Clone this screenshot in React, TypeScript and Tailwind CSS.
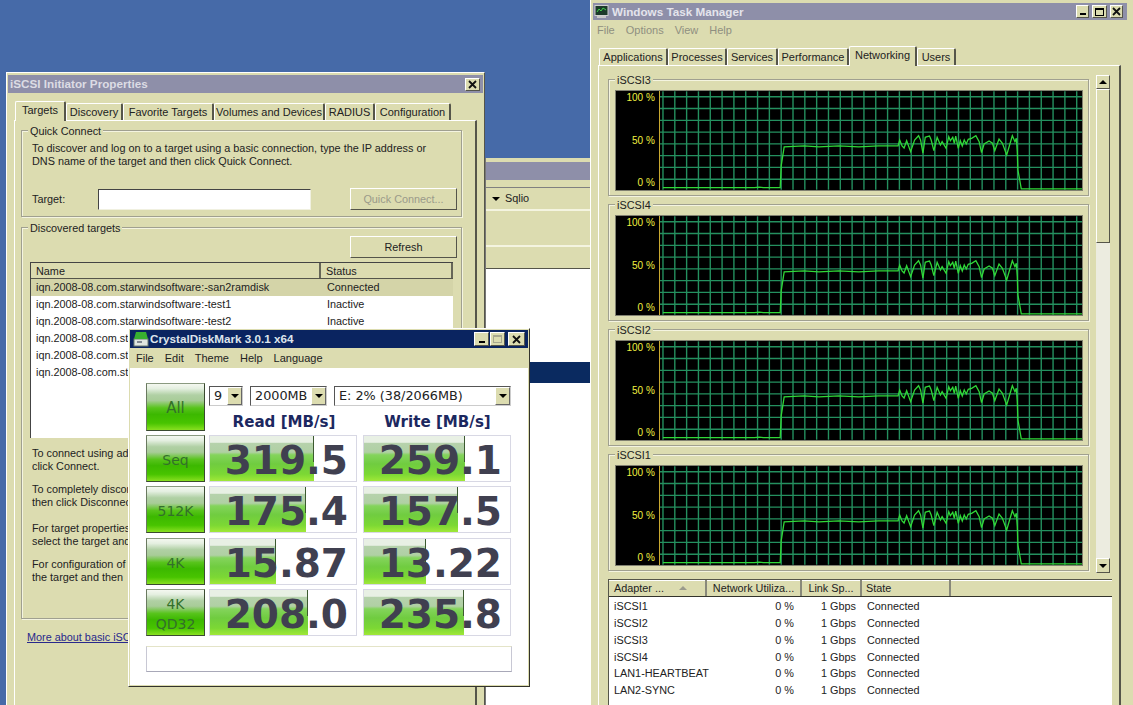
import React from 'react';

const GRAPHS = ['iSCSI3', 'iSCSI4', 'iSCSI2', 'iSCSI1'];

// usage trace read off the reference, as [x, y] at 3x, starting where the load gets noisy
const TRACE = [
  [50, 78], [55, 60], [62, 78], [68, 84], [76, 62], [88, 95], [100, 60], [112, 47], [118, 60], [125, 100],
  [132, 52], [138, 50], [145, 48], [150, 60], [158, 92], [168, 52], [178, 75], [183, 65], [195, 85], [203, 50],
  [208, 62], [215, 52], [220, 70], [224, 48], [232, 85], [238, 62], [244, 78], [250, 60], [256, 72], [262, 58],
  [272, 55], [285, 47], [295, 65], [302, 98], [310, 72], [325, 63], [335, 70], [342, 92], [355, 57], [365, 70],
  [378, 105], [395, 47], [403, 65], [407, 55], [410, 95], [412, 150], [422, 208],
];
const TRACE_POINTS = TRACE.map(([x, y]) => `${(223 + x / 3).toFixed(1)},${(29 + y / 3).toFixed(1)}`).join(' ');

const ADAPTERS = ['iSCSI1', 'iSCSI2', 'iSCSI3', 'iSCSI4', 'LAN1-HEARTBEAT', 'LAN2-SYNC'];

const SCORES = [
  { label: 'Seq', read: '319.5', readBar: 104, write: '259.1', writeBar: 101 },
  { label: '512K', read: '175.4', readBar: 96, write: '157.5', writeBar: 94 },
  { label: '4K', read: '15.87', readBar: 66, write: '13.22', writeBar: 62 },
  { label: '4K QD32', read: '208.0', readBar: 98, write: '235.8', writeBar: 100 },
];

const Tab = ({ label, width, active }: { label: string; width: number; active?: boolean }) => (
  <div
    style={{ width }}
    className={`flex items-center justify-center whitespace-nowrap border-t border-l border-r-2 border-t-white border-l-white border-r-[#55554a] rounded-t-[2px] ${
      active ? 'h-[20px] relative z-10 -mb-px pb-[2px] bg-[#dcdcb0]' : 'h-[17px]'
    }`}
  >
    {label}
  </div>
);

const Raised = ({ className, children }: { className: string; children?: React.ReactNode }) => (
  <div className={`flex items-center justify-center bg-[#dcdcb0] border border-t-white border-l-white border-r-[#55554a] border-b-[#55554a] ${className}`}>
    {children}
  </div>
);

const Arrow = ({ up, muted }: { up?: boolean; muted?: boolean }) => (
  <div
    className={`w-0 h-0 border-x-[4px] border-x-transparent ${
      up ? (muted ? 'border-b-[4px] border-b-[#9a9a8c]' : 'border-b-[4px] border-b-black') : 'border-t-[4px] border-t-black'
    }`}
  />
);

const Group = ({ title, className, children }: { title: string; className: string; children?: React.ReactNode }) => (
  <div className={`relative border border-[#a0a090] shadow-[inset_1px_1px_0_#f4f4e0,1px_1px_0_#f4f4e0] ${className}`}>
    <span className="absolute left-[6px] -top-[7px] bg-[#dcdcb0] px-[2px] leading-[14px]">{title}</span>
    {children}
  </div>
);

const CloseX = () => (
  <svg width="9" height="9" viewBox="0 0 9 9">
    <path d="M1 1L8 8M8 1L1 8" stroke="#111" strokeWidth="1.8" />
  </svg>
);

const NetworkGraph = ({ name }: { name: string }) => {
  const vertical = Array.from({ length: 36 }, (_, i) => 3 + i * 11.9);
  const horizontal = Array.from({ length: 8 }, (_, i) => 5.5 + i * 11.85);

  return (
    <Group title={name} className="h-[117px] pt-[10px] pl-[6px] pr-[5px]">
      <div className="flex h-[101px] bg-black border border-[#808070]">
        <div className="w-[43px] flex flex-col justify-between items-end pr-[4px] pt-[1px] pb-[1px] text-[10px] leading-[12px] text-[#f0f040]">
          <span>100 %</span>
          <span>50 %</span>
          <span>0 %</span>
        </div>
        <svg width="425" height="99" viewBox="0 0 425 99" className="border-l border-l-[#c8a830]">
          {vertical.map((x) => (
            <line key={x} x1={x} x2={x} y1="0" y2="99" stroke="#24905f" strokeWidth="1.4" />
          ))}
          {horizontal.map((y) => (
            <line key={y} x1="0" x2="425" y1={y} y2={y} stroke="#24905f" strokeWidth="1.4" />
          ))}
          <polyline
            fill="none"
            stroke="#30d838"
            strokeWidth="1.3"
            points={`3,97 95,97 100,96.4 104,97 121,97 122,75 125,56 145,55 160,56 180,55 200,56 220,55 ${TRACE_POINTS} 425,98.3`}
          />
        </svg>
      </div>
    </Group>
  );
};

const TaskManager = () => (
  <div className="absolute left-[590px] top-0 w-[543px] h-[705px] bg-[#dcdcb0] border-l border-l-white pt-[3px] text-[10.85px] text-[#222]">
    <div className="flex items-center h-[17px] ml-[2px] mr-[6px] pl-[1px] pr-[4px] bg-[#8e8fa9]">
      <svg width="15" height="13" viewBox="0 0 15 13">
        <rect x="1" y="0.5" width="13" height="10" fill="#1c3a2a" stroke="#d0d0d0" />
        <path d="M3 7L5 4L7 6L9 3L12 5" stroke="#3ed04a" fill="none" />
        <rect x="3" y="11" width="9" height="2" fill="#c8c8c8" />
      </svg>
      <span className="ml-[3px] flex-1 font-bold text-[11.7px] text-[#e4e4ec]">Windows Task Manager</span>
      <div className="flex gap-[3px]">
        <Raised className="w-[13px] h-[13px] items-end pb-[2px]">
          <div className="w-[6px] h-[2px] bg-black" />
        </Raised>
        <Raised className="w-[15px] h-[13px]">
          <div className="w-[9px] h-[8px] border border-t-2 border-black" />
        </Raised>
        <Raised className="w-[13px] h-[13px]">
          <CloseX />
        </Raised>
      </div>
    </div>
    <div className="flex h-[21px] items-center pl-[6px] gap-[11px] text-[#8f8f80] text-[11px]">
      <span>File</span>
      <span>Options</span>
      <span>View</span>
      <span>Help</span>
    </div>
    <div className="flex items-end h-[24px] pl-[8px] text-[11px]">
      <Tab label="Applications" width={69} />
      <Tab label="Processes" width={59} />
      <Tab label="Services" width={51} />
      <Tab label="Performance" width={71} />
      <Tab label="Networking" width={68} active />
      <Tab label="Users" width={39} />
    </div>
    <div className="ml-[7px] mr-[12px] h-[660px] border-t border-t-white border-l border-l-white border-r-2 border-r-[#55554a] pl-[9px] pr-[9px] pt-[13px]">
      <div className="flex">
        <div className="w-[481px] flex flex-col gap-[8px]">
          {GRAPHS.map((name) => (
            <NetworkGraph key={name} name={name} />
          ))}
        </div>
        <div className="ml-[7px] -mt-[4px] w-[16px] h-[498px] flex flex-col">
          <Raised className="h-[14px] w-full">
            <Arrow up />
          </Raised>
          <div className="h-[154px] bg-[#dcdcb0] border border-t-white border-l-white border-r-[#55554a] border-b-[#55554a]" />
          <div className="flex-1 bg-[#ecece0]" />
          <Raised className="h-[15px] w-full">
            <Arrow />
          </Raised>
        </div>
      </div>
      <div className="mt-[6px] w-[504px] h-[130px] border-t border-l border-[#55554a]">
        <div className="flex h-[17px] border-b border-b-[#33332c]">
          <div className="w-[98px] flex items-center pl-[5px] gap-[15px] border-r-2 border-r-[#88887a] shadow-[inset_0_1px_0_#fff]">
            <span>Adapter ...</span>
            <Arrow up muted />
          </div>
          <div className="w-[95px] flex items-center justify-center border-r-2 border-r-[#88887a] shadow-[inset_0_1px_0_#fff]">Network Utiliza...</div>
          <div className="w-[60px] flex items-center justify-center border-r-2 border-r-[#88887a] shadow-[inset_0_1px_0_#fff]">Link Sp...</div>
          <div className="w-[89px] flex items-center pl-[4px] border-r-2 border-r-[#88887a] shadow-[inset_0_1px_0_#fff]">State</div>
          <div className="flex-1 shadow-[inset_0_1px_0_#fff]" />
        </div>
        <div className="bg-white h-[112px] pt-[1px]">
          {ADAPTERS.map((name) => (
            <div key={name} className="flex h-[16.8px] items-center">
              <span className="w-[98px] pl-[5px] whitespace-nowrap">{name}</span>
              <span className="w-[95px] pr-[8px] text-right">0 %</span>
              <span className="w-[60px] pr-[6px] text-right">1 Gbps</span>
              <span className="pl-[5px]">Connected</span>
            </div>
          ))}
        </div>
      </div>
    </div>
  </div>
);

const BackWindow = () => (
  <div className="absolute left-[485px] top-[158px] w-[105px] h-[547px] flex flex-col bg-[#dcdcb0] text-[10.85px] text-[#222] pt-[4px] border-l border-l-[#777]">
    <div className="h-[18px] bg-[#8e8fa9]" />
    <div className="h-[8px] border-b border-b-[#808080]" />
    <div className="flex items-center h-[23px] pl-[6px] gap-[5px] border-b-2 border-b-[#f4f4e0]">
      <Arrow />
      <span>Sqlio</span>
    </div>
    <div className="h-[36px] border-b-2 border-b-[#f4f4e0]" />
    <div className="h-[22px] border-b border-b-[#55554a]" />
    <div className="h-[93px] bg-white" />
    <div className="h-[21px] bg-[#0a2a60]" />
    <div className="flex-1 bg-white" />
  </div>
);

const TARGET_ROWS = [
  { name: 'iqn.2008-08.com.starwindsoftware:-test1', status: 'Inactive' },
  { name: 'iqn.2008-08.com.starwindsoftware:-test2', status: 'Inactive' },
  { name: 'iqn.2008-08.com.st', status: '' },
  { name: 'iqn.2008-08.com.st', status: '' },
  { name: 'iqn.2008-08.com.st', status: '' },
];

const InitiatorWindow = () => (
  <div className="absolute left-[6px] top-[72px] w-[479px] h-[660px] bg-[#dcdcb0] border-t border-l border-t-white border-l-white border-r border-r-[#55554a] pt-[2px] px-[1px] text-[10.85px] text-[#222]">
    <div className="flex items-center h-[18px] pl-[2px] pr-[3px] bg-[#8e8fa9]">
      <span className="flex-1 font-bold text-[11.7px] text-[#dcdce4]">iSCSI Initiator Properties</span>
      <Raised className="w-[15px] h-[13px]">
        <CloseX />
      </Raised>
    </div>
    <div className="flex items-end h-[27px] pl-[7px] text-[11px]">
      <Tab label="Targets" width={51} active />
      <Tab label="Discovery" width={57} />
      <Tab label="Favorite Targets" width={91} />
      <Tab label="Volumes and Devices" width={111} />
      <Tab label="RADIUS" width={50} />
      <Tab label="Configuration" width={76} />
    </div>
    <div className="ml-[6px] w-[463px] h-[610px] border-t border-t-white border-l border-l-white border-r-2 border-r-[#55554a] pl-[6px] pr-[13px] pt-[9px]">
      <Group title="Quick Connect" className="h-[87px] pl-[10px] pr-[4px] pt-[11px]">
        <p className="leading-[13px] whitespace-nowrap">
          To discover and log on to a target using a basic connection, type the IP address or
          <br />
          DNS name of the target and then click Quick Connect.
        </p>
        <div className="flex items-center mt-[20px]">
          <span className="w-[66px]">Target:</span>
          <div className="w-[213px] h-[21px] bg-white border border-t-[#444] border-l-[#444] border-r-[#f0f0e0] border-b-[#f0f0e0]" />
          <Raised className="ml-[39px] w-[107px] h-[22px] text-[#9a9a8a]">Quick Connect...</Raised>
        </div>
      </Group>
      <Group title="Discovered targets" className="mt-[10px] h-[392px] pl-[8px] pt-[8px]">
        <div className="flex justify-end pr-[4px]">
          <Raised className="w-[107px] h-[22px]">Refresh</Raised>
        </div>
        <div className="mt-[4px] w-[423px] h-[176px] bg-white border-t border-l border-t-[#444] border-l-[#444]">
          <div className="flex h-[16px] bg-[#dcdcb0] border-b border-b-[#55554a]">
            <div className="w-[290px] pl-[5px] leading-[16px] border-r-2 border-r-[#666658]">Name</div>
            <div className="w-[132px] pl-[5px] leading-[16px] border-r-2 border-r-[#666658]">Status</div>
          </div>
          <div className="flex h-[17px] items-center leading-[13px] bg-[#d4d4a8]">
            <span className="w-[290px] pl-[5px]">iqn.2008-08.com.starwindsoftware:-san2ramdisk</span>
            <span className="pl-[6px]">Connected</span>
          </div>
          {TARGET_ROWS.map((row, i) => (
            <div key={i} className="flex h-[17px] items-center leading-[13px]">
              <span className="w-[290px] pl-[5px]">{row.name}</span>
              <span className="pl-[6px]">{row.status}</span>
            </div>
          ))}
        </div>
        <div className="mt-[9px] pl-[2px] leading-[13px] whitespace-nowrap">
          <p>
            To connect using ad
            <br />
            click Connect.
          </p>
          <p className="mt-[10px]">
            To completely discon
            <br />
            then click Disconnect
          </p>
          <p className="mt-[13px]">
            For target properties
            <br />
            select the target and
          </p>
          <p className="mt-[10px]">
            For configuration of
            <br />
            the target and then
          </p>
        </div>
      </Group>
      <p className="mt-[10px] ml-[6px] whitespace-nowrap text-[#28288c] underline">More about basic iSC</p>
    </div>
  </div>
);

const GREEN_BUTTON =
  'bg-[linear-gradient(#f4f8f0_0%,#e4efe0_10%,#b0d0a4_24%,#a8cc98_36%,#58c41c_52%,#3cb800_66%,#48c400_85%,#88e020_100%)]';
const GREEN_BAR =
  'bg-[linear-gradient(#e8f0e4_0%,#e8f0e4_14%,#b6d2ac_16%,#b0d0a4_36%,#84d45c_42%,#70cc40_62%,#7cd834_85%,#a0e838_100%)]';

const Combo = ({ value, className }: { value: string; className: string }) => (
  <div className={`flex items-center justify-between h-[20px] bg-white border border-t-[#555] border-l-[#555] border-r-[#ccc] border-b-[#ccc] ${className}`}>
    <span className="pl-[4px]">{value}</span>
    <div className="flex items-center justify-center w-[15px] h-[18px] bg-[#dcdcb0] border border-t-white border-l-white border-r-[#666] border-b-[#666]">
      <Arrow />
    </div>
  </div>
);

const ScoreCell = ({ value, bar }: { value: string; bar: number }) => (
  <div className="relative w-[148px] h-[47px] bg-white border border-[#d8d8e4] overflow-hidden">
    <div style={{ width: bar }} className={`relative h-full ${GREEN_BAR}`}>
      <div className="absolute right-0 top-0 w-px h-[26px] bg-[#3c5a30]" />
    </div>
    <span className="absolute right-[8px] top-[1px] text-[39px] leading-[47px] font-bold text-[#404050]">{value}</span>
  </div>
);

const GreenButton = ({ label, className }: { label: string; className: string }) => (
  <div className={`flex items-center justify-center w-[59px] pt-[3px] text-center text-[#33702a] border border-t-[#8a9a80] border-l-[#6a7a60] border-r-[#3a4a30] border-b-[#3a4a30] ${GREEN_BUTTON} ${className}`}>
    {label}
  </div>
);

const CrystalDiskMark = () => (
  <div className="absolute left-[128px] top-[328px] w-[402px] h-[359px] flex flex-col bg-[#dcdcb0] border border-t-white border-l-white border-r-[#33332c] border-b-[#33332c] p-[1px] text-[#222] font-['DejaVu_Sans',sans-serif]">
    <div className="flex items-center h-[18px] shrink-0 pl-[3px] pr-[3px] bg-[#0a2460]">
      <svg width="16" height="16" viewBox="0 0 16 16">
        <rect x="1" y="8" width="14" height="7" fill="#dfe6e0" stroke="#6a7a70" />
        <path d="M3 1H13L15 8H1Z" fill="#38b030" />
        <rect x="4" y="10" width="5" height="2" fill="#808890" />
      </svg>
      <span className="ml-[1px] flex-1 font-bold text-[11.7px] text-[#dde4ec] font-['Liberation_Sans',sans-serif]">CrystalDiskMark 3.0.1 x64</span>
      <div className="flex gap-[1px] text-[#222]">
        <Raised className="w-[15px] h-[14px] items-end pb-[2px]">
          <div className="w-[6px] h-[2px] bg-black" />
        </Raised>
        <Raised className="w-[15px] h-[14px] mr-[2px]">
          <div className="w-[9px] h-[8px] border border-t-2 border-[#a8a890]" />
        </Raised>
        <Raised className="w-[17px] h-[14px]">
          <CloseX />
        </Raised>
      </div>
    </div>
    <div className="flex items-center h-[20px] shrink-0 pl-[6px] gap-[11px] font-['Liberation_Sans',sans-serif] text-[11px]">
      <span>File</span>
      <span>Edit</span>
      <span>Theme</span>
      <span>Help</span>
      <span>Language</span>
    </div>
    <div className="flex-1 bg-white pl-[16px] pt-[15px]">
      <div className="flex gap-[4px] h-[49px]">
        <GreenButton label="All" className="h-[48px] text-[15px]" />
        <div className="flex flex-col">
          <div className="flex mt-[3px] gap-[7px] text-[12.8px]">
            <Combo value="9" className="w-[34px]" />
            <Combo value="2000MB" className="w-[77px]" />
            <Combo value="E: 2% (38/2066MB)" className="w-[177px]" />
          </div>
          <div className="flex font-bold text-[#1c2860] text-[15.1px] leading-[20px] mt-[6px]">
            <span className="w-[150px] text-center">Read [MB/s]</span>
            <span className="w-[157px] text-center">Write [MB/s]</span>
          </div>
        </div>
      </div>
      <div className="flex flex-col gap-[4.3px] mt-[3px]">
        {SCORES.map((s) => (
          <div key={s.label} className="flex">
            <GreenButton label={s.label} className="h-[47px] text-[14px] leading-[20px]" />
            <div className="ml-[4px]">
              <ScoreCell value={s.read} bar={s.readBar} />
            </div>
            <div className="ml-[6px]">
              <ScoreCell value={s.write} bar={s.writeBar} />
            </div>
          </div>
        ))}
      </div>
      <div className="mt-[10px] w-[366px] h-[26px] border border-[#c8c8d4] border-t-[#e4e4c8] border-b-[#a8a8b8]" />
    </div>
  </div>
);

export default function App() {
  return (
    <div className="relative w-[1133px] h-[705px] overflow-hidden bg-[#466aa8] font-['Liberation_Sans',sans-serif]">
      <BackWindow />
      <InitiatorWindow />
      <CrystalDiskMark />
      <TaskManager />
    </div>
  );
}
